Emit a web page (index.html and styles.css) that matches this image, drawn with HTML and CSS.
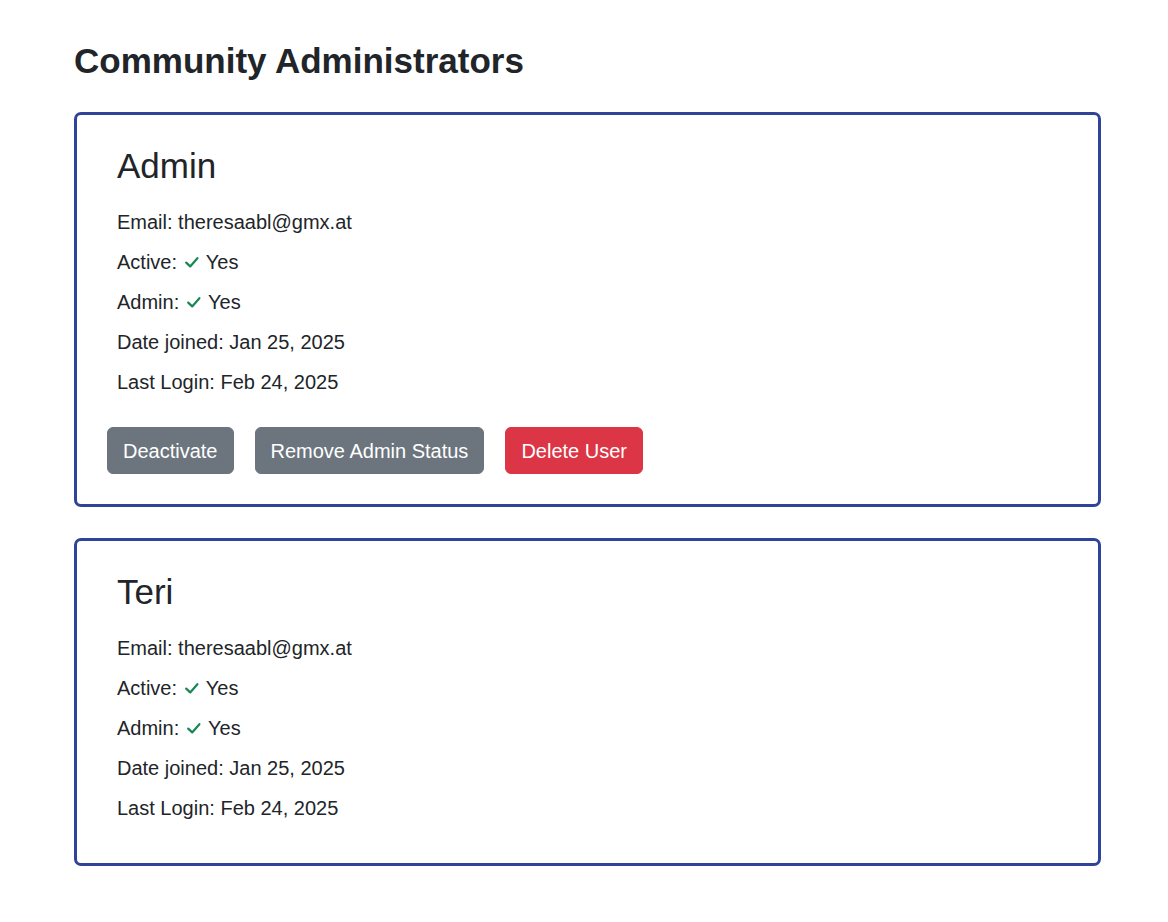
FILE: index.html
```html
<!DOCTYPE html>
<html lang="en">
<head>
<meta charset="utf-8">
<title>Community Administrators</title>
<link rel="stylesheet" href="styles.css">
</head>
<body>
<main class="page">
  <h1 class="page-title">Community Administrators</h1>

  <section class="user-card">
    <h2 class="user-name">Admin</h2>
    <p class="field">Email: theresaabl@gmx.at</p>
    <p class="field">Active: <svg class="check" viewBox="0 0 18 20" aria-hidden="true"><polyline points="3.2,10.6 7.2,14.4 14.4,6.2"/></svg> Yes</p>
    <p class="field">Admin: <svg class="check" viewBox="0 0 18 20" aria-hidden="true"><polyline points="3.2,10.6 7.2,14.4 14.4,6.2"/></svg> Yes</p>
    <p class="field">Date joined: Jan 25, 2025</p>
    <p class="field">Last Login: Feb 24, 2025</p>
    <div class="actions">
      <button class="btn btn-secondary" type="button">Deactivate</button>
      <button class="btn btn-secondary" type="button">Remove Admin Status</button>
      <button class="btn btn-danger" type="button">Delete User</button>
    </div>
  </section>

  <section class="user-card">
    <h2 class="user-name">Teri</h2>
    <p class="field">Email: theresaabl@gmx.at</p>
    <p class="field">Active: <svg class="check" viewBox="0 0 18 20" aria-hidden="true"><polyline points="3.2,10.6 7.2,14.4 14.4,6.2"/></svg> Yes</p>
    <p class="field">Admin: <svg class="check" viewBox="0 0 18 20" aria-hidden="true"><polyline points="3.2,10.6 7.2,14.4 14.4,6.2"/></svg> Yes</p>
    <p class="field">Date joined: Jan 25, 2025</p>
    <p class="field">Last Login: Feb 24, 2025</p>
  </section>
</main>
</body>
</html>
```
FILE: styles.css
```css
html, body {
  margin: 0;
  padding: 0;
  background: #ffffff;
}

body {
  font-family: "Liberation Sans", Arial, sans-serif;
  font-size: 20px;
  line-height: 1.5;
  color: #212529;
}

.page {
  width: 1027px;
  margin-left: 74px;
  padding-top: 40px;
}

.page-title {
  margin: 0 0 30px 0;
  font-size: 35px;
  line-height: 1.2;
  font-weight: 700;
}

.user-card {
  border: 3px solid #2f4499;
  border-radius: 7px;
  padding: 30px 40px 30px 40px;
  margin-bottom: 31px;
}

.user-name {
  margin: 0 0 20px 0;
  font-size: 35px;
  line-height: 1.2;
  font-weight: 400;
}

.field {
  margin: 0 0 10px 0;
}

.check {
  width: 18px;
  height: 20px;
  fill: none;
  stroke: #198754;
  stroke-width: 2.2;
  stroke-linecap: round;
  stroke-linejoin: round;
  vertical-align: -0.125em;
}

.actions {
  display: flex;
  gap: 21px;
  margin-top: 30px;
  margin-left: -10px;
}

.btn {
  font-family: "Liberation Sans", Arial, sans-serif;
  font-size: 20px;
  line-height: 30px;
  padding: 7.5px 15px;
  border: 1px solid transparent;
  border-radius: 6px;
  color: #ffffff;
  cursor: pointer;
}

.btn-secondary {
  background: #6c757d;
  border-color: #6c757d;
}

.btn-danger {
  background: #dc3545;
  border-color: #dc3545;
}
```
